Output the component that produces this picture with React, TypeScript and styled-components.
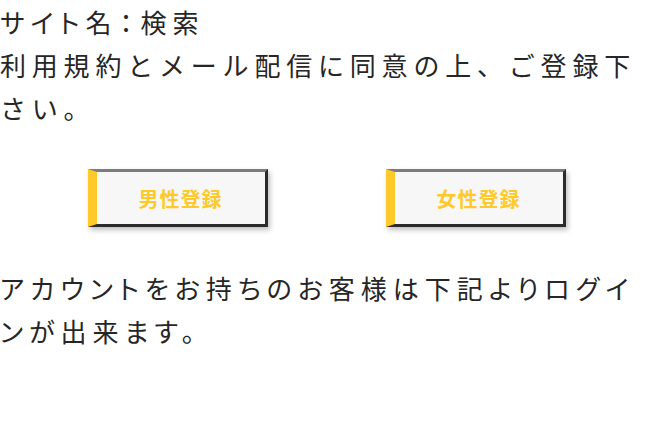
import React from "react";
import styled, { createGlobalStyle } from "styled-components";

const GlobalStyle = createGlobalStyle`
  html, body {
    margin: 0;
    padding: 0;
    background: #ffffff;
  }
  body {
    font-family: "Noto Sans CJK JP", "Noto Sans", sans-serif;
    color: #262626;
  }
`;

const Page = styled.div`
  display: flex;
  flex-direction: column;
`;

const Intro = styled.div`
  display: flex;
  flex-direction: column;
`;

const TextLine = styled.p<{ $proportional?: boolean; $spacing: number }>`
  margin: 0;
  font-size: 26px;
  line-height: 43px;
  letter-spacing: ${(p) => p.$spacing}px;
  font-feature-settings: ${(p) => (p.$proportional ? '"palt"' : "normal")};
  color: #262626;
`;

const Colon = styled.span`
  margin: 0 2px;
`;

const ButtonRow = styled.div`
  display: flex;
  justify-content: center;
  gap: 118px;
  margin: 40px 0 39px;
`;

const RegisterButton = styled.a`
  box-sizing: border-box;
  display: flex;
  align-items: center;
  justify-content: center;
  width: 180px;
  height: 58px;
  background: #f7f7f7;
  border-style: solid;
  border-width: 3px 3px 3px 9px;
  border-color: #7c7c7c #2b2b2b #2b2b2b #ffc92a;
  box-shadow: 2px 3px 5px rgba(0, 0, 0, 0.25);
  color: #ffc92a;
  font-size: 20px;
  font-weight: 700;
  letter-spacing: 1px;
  text-decoration: none;
  cursor: pointer;
`;

export default function App() {
  return (
    <>
      <GlobalStyle />
      <Page>
        <Intro>
          <TextLine $proportional $spacing={6}>
            サイト名<Colon>：</Colon>検索
          </TextLine>
          <TextLine $spacing={5.8}>利用規約とメール配信に同意の上、ご登録下さい。</TextLine>
        </Intro>
        <ButtonRow>
          <RegisterButton>男性登録</RegisterButton>
          <RegisterButton>女性登録</RegisterButton>
        </ButtonRow>
        <TextLine $proportional $spacing={6}>
          アカウントをお持ちのお客様は下記よりログインが出来ます。
        </TextLine>
      </Page>
    </>
  );
}
